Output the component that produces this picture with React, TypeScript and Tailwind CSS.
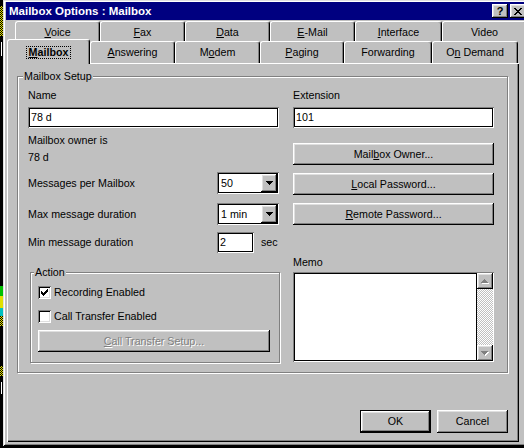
import React from 'react';

const raised =
  'shadow-[inset_-1px_-1px_0_#000,inset_1px_1px_0_#fff,inset_-2px_-2px_0_#808080,inset_2px_2px_0_#dfdfdf]';
const sunken =
  'shadow-[inset_1px_1px_0_#808080,inset_-1px_-1px_0_#fff,inset_2px_2px_0_#000,inset_-2px_-2px_0_#dfdfdf]';
const editSunken =
  'shadow-[inset_1px_1px_0_#808080,inset_-1px_-1px_0_#fff,inset_2px_2px_0_#000,inset_-2px_-2px_0_#000]';
const etched = 'border border-[#808080] shadow-[inset_1px_1px_0_#fff,1px_1px_0_#fff]';

function Acc({ text, i }: { text: string; i: number }) {
  if (i < 0) return <>{text}</>;
  return (
    <>
      {text.slice(0, i)}
      <u>{text[i]}</u>
      {text.slice(i + 1)}
    </>
  );
}

type TabDef = { label: string; u: number; w: string; sel?: boolean };

const row1: TabDef[] = [
  { label: 'Voice', u: 0, w: 'w-[85px]' },
  { label: 'Fax', u: 0, w: 'w-[85px]' },
  { label: 'Data', u: 0, w: 'w-[85px]' },
  { label: 'E-Mail', u: 0, w: 'w-[85px]' },
  { label: 'Interface', u: 0, w: 'w-[87px]' },
  { label: 'Video', u: -1, w: 'w-[85px]' },
];

const row2: TabDef[] = [
  { label: 'Mailbox', u: 0, w: 'w-[83px]', sel: true },
  { label: 'Answering', u: 0, w: 'w-[85px]' },
  { label: 'Modem', u: 1, w: 'w-[85px]' },
  { label: 'Paging', u: 0, w: 'w-[84px]' },
  { label: 'Forwarding', u: -1, w: 'w-[88px]' },
  { label: 'On Demand', u: 1, w: 'w-[86px]' },
];

const tabBase =
  'shrink-0 flex items-center justify-center bg-[#c0c0c0] border-l border-t border-r border-l-white border-t-white border-r-black rounded-t-[3px] shadow-[inset_-1px_0_0_#808080]';

function Tab({ t, h }: { t: TabDef; h: string }) {
  if (t.sel) {
    return (
      <div className={`${tabBase} ${t.w} h-[25px] -mb-px relative z-10 pt-[1px]`}>
        <span className="font-bold border border-dotted border-black px-[2px] leading-[11px]">
          <Acc text={t.label} i={t.u} />
        </span>
      </div>
    );
  }
  return (
    <div className={`${tabBase} ${t.w} ${h}`}>
      <span>
        <Acc text={t.label} i={t.u} />
      </span>
    </div>
  );
}

function DownArrow() {
  return (
    <svg width="7" height="4" viewBox="0 0 7 4" shapeRendering="crispEdges">
      <path d="M0 0h7v1H0zM1 1h5v1H1zM2 2h3v1H2zM3 3h1v1H3z" fill="#000" />
    </svg>
  );
}

function ScrollArrow({ up }: { up: boolean }) {
  const d = up
    ? 'M3 0h1v1H3zM2 1h3v1H2zM1 2h5v1H1zM0 3h7v1H0z'
    : 'M0 0h7v1H0zM1 1h5v1H1zM2 2h3v1H2zM3 3h1v1H3z';
  return (
    <svg width="8" height="5" viewBox="0 0 8 5" shapeRendering="crispEdges">
      <path d={d} fill="#fff" transform="translate(1 1)" />
      <path d={d} fill="#808080" />
    </svg>
  );
}

function Btn({
  children,
  className,
  disabled,
}: {
  children: React.ReactNode;
  className: string;
  disabled?: boolean;
}) {
  return (
    <div
      className={`shrink-0 flex items-center justify-center bg-[#c0c0c0] ${raised} ${className} ${
        disabled ? 'text-[#808080] [text-shadow:1px_1px_0_#fff]' : ''
      }`}
    >
      <span>{children}</span>
    </div>
  );
}

function Combo({ value }: { value: string }) {
  return (
    <div className={`shrink-0 w-[62px] h-[22px] bg-white ${editSunken} p-[2px] flex items-center`}>
      <span className="flex-1 pl-[2px]">{value}</span>
      <div className={`w-[16px] h-[18px] bg-[#c0c0c0] ${raised} flex items-center justify-center`}>
        <DownArrow />
      </div>
    </div>
  );
}

function Check({ checked }: { checked?: boolean }) {
  return (
    <div className={`shrink-0 w-[13px] h-[13px] bg-white ${sunken} flex items-center justify-center`}>
      {checked && (
        <svg width="7" height="7" viewBox="0 0 7 7" shapeRendering="crispEdges">
          <path
            d="M6 0h1v1H6zM5 1h2v1H5zM0 2h1v1H0zM4 2h3v1H4zM0 3h2v1H0zM3 3h3v1H3zM0 4h5v1H0zM1 5h3v1H1zM2 6h1v1H2z"
            fill="#000"
          />
        </svg>
      )}
    </div>
  );
}

function Desktop() {
  return (
    <div className="w-[3px] min-w-[3px] shrink-0 h-[448px] flex flex-col bg-black">
      <div className="h-[6px] shrink-0" />
      <div className="h-[30px] shrink-0 bg-[image:repeating-conic-gradient(#e0e000_0%_25%,#000_0%_50%)] bg-[length:2px_2px] bg-size-[2px_2px]" />
      <div className="h-[6px] shrink-0" />
      <div className="h-[14px] shrink-0 ml-[1px] w-[1px] bg-white" />
      <div className="h-[230px] shrink-0" />
      <div className="h-[10px] shrink-0 bg-[#00c000]" />
      <div className="h-[12px] shrink-0 bg-[#e0e000]" />
      <div className="h-[8px] shrink-0 bg-[#00c0c0]" />
      <div className="h-[10px] shrink-0 bg-[image:repeating-conic-gradient(#e0e000_0%_25%,#000_0%_50%)] bg-[length:2px_2px] bg-size-[2px_2px]" />
      <div className="h-[40px] shrink-0" />
      <div className="h-[10px] shrink-0 bg-[image:repeating-conic-gradient(#e0e000_0%_25%,#000_0%_50%)] bg-[length:2px_2px] bg-size-[2px_2px]" />
      <div className="h-[6px] shrink-0" />
      <div className="h-[12px] shrink-0 ml-[1px] w-[1px] bg-white" />
    </div>
  );
}

function TitleBar() {
  return (
    <div className="h-[18px] shrink-0 bg-[#000080] flex items-center pl-[3px]">
      <span className="text-white font-bold text-[11.5px] leading-[14px] whitespace-nowrap">
        Mailbox Options : Mailbox
      </span>
      <div className="ml-auto mr-[1px] flex gap-[2px]">
        <div className={`w-[16px] h-[14px] bg-[#c0c0c0] ${raised} flex items-center justify-center`}>
          <span className="font-bold text-[11px] leading-[11px] pt-[1px]">?</span>
        </div>
        <div className={`w-[16px] h-[14px] bg-[#c0c0c0] ${raised} flex items-center justify-center`}>
          <svg width="8" height="7" viewBox="0 0 8 7" shapeRendering="crispEdges">
            <path
              d="M0 0h2v1H0zM6 0h2v1H6zM1 1h2v1H1zM5 1h2v1H5zM2 2h4v1H2zM3 3h2v1H3zM2 4h4v1H2zM1 5h2v1H1zM5 5h2v1H5zM0 6h2v1H0zM6 6h2v1H6z"
              fill="#000"
            />
          </svg>
        </div>
      </div>
    </div>
  );
}

function Panel() {
  return (
    <div className="relative ml-[1px] w-[512px] h-[379px] shrink-0 bg-[#c0c0c0] pt-[13px] pl-[10px] shadow-[inset_1px_1px_0_#fff,inset_-1px_-1px_0_#000,inset_-2px_-2px_0_#808080]">
      <div className={`relative w-[491px] h-[297px] ${etched} flex pl-[10px] pt-[12px]`}>
        <span className="absolute -top-[7px] left-[5px] px-[1px] bg-[#c0c0c0] whitespace-nowrap">
          Mailbox Setup
        </span>

        {/* left column */}
        <div className="w-[251px] shrink-0 flex flex-col">
          <div className="h-[13px]">Name</div>
          <div className={`mt-[5px] h-[21px] bg-white ${editSunken} flex items-center pl-[3px]`}>78 d</div>
          <div className="mt-[6px] h-[13px]">Mailbox owner is</div>
          <div className="mt-[4px] h-[13px]">78 d</div>
          <div className="mt-[8px] h-[22px] flex items-center">
            <span className="w-[189px] shrink-0">Messages per Mailbox</span>
            <Combo value="50" />
          </div>
          <div className="mt-[9px] h-[22px] flex items-center">
            <span className="w-[189px] shrink-0">Max message duration</span>
            <Combo value="1 min" />
          </div>
          <div className="mt-[7px] h-[21px] flex items-center">
            <span className="w-[189px] shrink-0">Min message duration</span>
            <div className={`w-[37px] h-[21px] shrink-0 bg-white ${editSunken} flex items-center pl-[3px]`}>2</div>
            <span className="ml-[7px]">sec</span>
          </div>
          <div className={`relative mt-[19px] ml-[2px] w-[250px] h-[91px] ${etched} flex flex-col pl-[7px] pt-[13px]`}>
            <span className="absolute -top-[7px] left-[3px] px-[1px] bg-[#c0c0c0]">Action</span>
            <div className="flex items-center h-[13px]">
              <Check checked />
              <span className="ml-[3px]">Recording Enabled</span>
            </div>
            <div className="flex items-center h-[13px] mt-[11px]">
              <Check />
              <span className="ml-[3px]">Call Transfer Enabled</span>
            </div>
            <Btn className="mt-[7px] w-[232px] h-[22px]" disabled>
              <Acc text="Call Transfer Setup..." i={0} />
            </Btn>
          </div>
        </div>

        {/* right column */}
        <div className="w-[201px] ml-[14px] shrink-0 flex flex-col">
          <div className="h-[13px]">Extension</div>
          <div className={`mt-[5px] h-[21px] bg-white ${editSunken} flex items-center pl-[3px]`}>101</div>
          <Btn className="mt-[15px] w-[201px] h-[22px]">
            <Acc text="Mailbox Owner..." i={4} />
          </Btn>
          <Btn className="mt-[8px] w-[201px] h-[22px]">
            <Acc text="Local Password..." i={0} />
          </Btn>
          <Btn className="mt-[8px] w-[201px] h-[22px]">
            <Acc text="Remote Password..." i={0} />
          </Btn>
          <div className="mt-[31px] h-[13px]">Memo</div>
          <div className="mt-[3px] h-[90px] p-[1px] shadow-[inset_1px_1px_0_#808080,inset_-1px_-1px_0_#fff] flex">
            <div className="flex-1 bg-white border border-black" />
            <div className="w-[16px] shrink-0 flex flex-col">
              <div className={`h-[16px] shrink-0 bg-[#c0c0c0] ${raised} flex items-center justify-center`}>
                <ScrollArrow up />
              </div>
              <div className="flex-1 bg-[image:repeating-conic-gradient(#c0c0c0_0%_25%,#ffffff_0%_50%)] bg-[length:2px_2px] bg-size-[2px_2px]" />
              <div className={`h-[16px] shrink-0 bg-[#c0c0c0] ${raised} flex items-center justify-center`}>
                <ScrollArrow up={false} />
              </div>
            </div>
          </div>
        </div>
      </div>

      <div className="w-[491px] flex justify-end gap-[6px] mt-[37px]">
        <div className={`w-[71px] h-[23px] shrink-0 border border-black bg-[#c0c0c0] ${raised} flex items-center justify-center`}>
          OK
        </div>
        <Btn className="w-[71px] h-[23px]">Cancel</Btn>
      </div>
    </div>
  );
}

export default function App() {
  return (
    <div className="w-[524px] h-[448px] overflow-hidden bg-black flex items-start font-['Liberation_Sans',Arial,Helvetica,sans-serif] text-[10.7px] leading-[13px] text-black">
      <Desktop />
      <div className="w-[527px] min-w-[527px] h-[446px] shrink-0 bg-[#c0c0c0] pt-[2px] px-[3px] flex flex-col shadow-[inset_1px_1px_0_#dfdfdf,inset_-1px_-1px_0_#000,inset_2px_2px_0_#fff,inset_-2px_-2px_0_#808080]">
        <TitleBar />
        <div className="h-[1px] shrink-0" />
        <div className="flex pl-[9px] h-[20px] shrink-0">
          {row1.map((t) => (
            <Tab key={t.label} t={t} h="h-[20px] pt-[2px]" />
          ))}
        </div>
        <div className="flex items-end pl-[1px] h-[22px] shrink-0">
          {row2.map((t) => (
            <Tab key={t.label} t={t} h="h-[22px]" />
          ))}
        </div>
        <Panel />
      </div>
    </div>
  );
}
